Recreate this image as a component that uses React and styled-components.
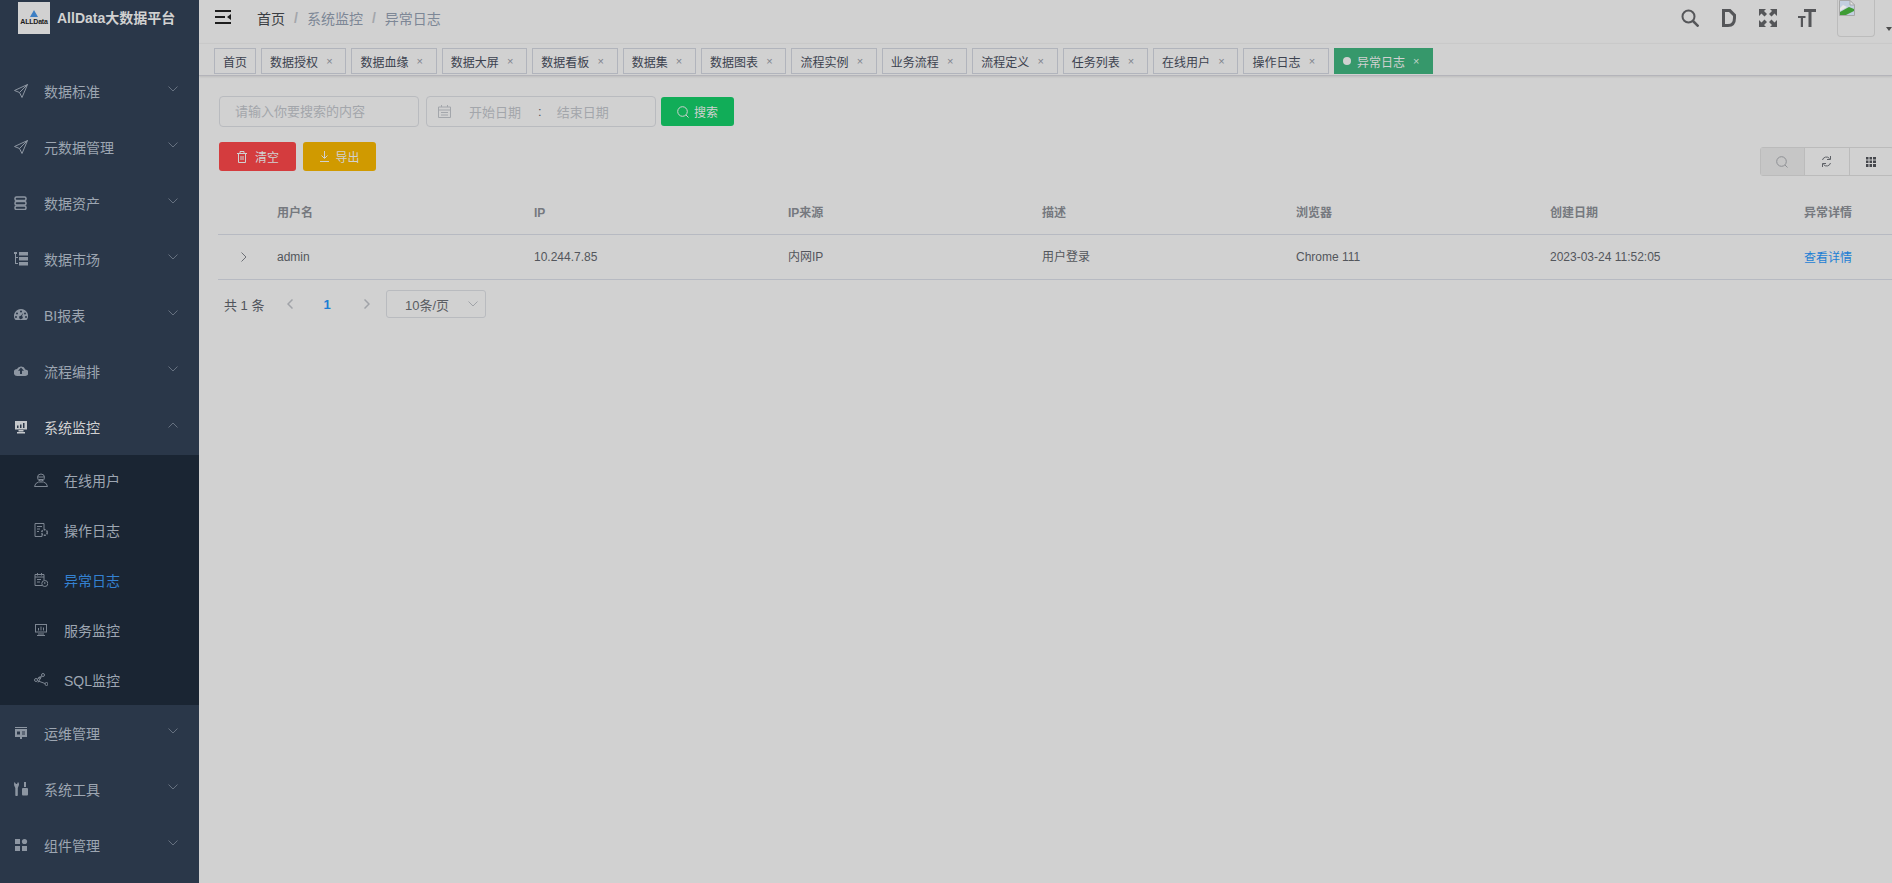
import React from 'react';
import styled, { createGlobalStyle } from 'styled-components';

const GlobalStyle = createGlobalStyle`
    html, body {
        margin: 0;
        padding: 0;
        height: 100%;
        overflow: hidden;
        background: #d1d1d1;
        font-family: "Liberation Sans", "Noto Sans CJK SC", sans-serif;
    }
`;

const Page = styled.div`
    display: flex;
    width: 1892px;
    height: 883px;
    overflow: hidden;
`;

const Sidebar = styled.aside`
    flex: none;
    width: 199px;
    background: #2a3749;
`;

const LogoRow = styled.div`
    display: flex;
    align-items: center;
    gap: 7px;
    height: 36px;
    padding-left: 18px;
    margin-bottom: 27px;
`;

const LogoBox = styled.div`
    width: 32px;
    height: 32px;
    background: #d1d1d1;
    display: flex;
    flex-direction: column;
    align-items: center;
    justify-content: flex-end;
    padding-bottom: 8px;
    box-sizing: border-box;
    svg { display: block; }
`;

const LogoText = styled.span`
    font-size: 7px;
    line-height: 8px;
    font-weight: bold;
    letter-spacing: -0.2px;
    color: #1b1b1b;
`;

const Title = styled.span`
    font-size: 14px;
    font-weight: bold;
    color: #d1d1d1;
    white-space: nowrap;
    margin-bottom: 3px;
`;

const MenuRow = styled.div`
    display: flex;
    align-items: center;
    height: 56px;
    padding-left: 14px;
    color: ${p => (p.$open ? '#d1d1d1' : '#9da6b2')};
    font-size: 14px;
`;

const MenuIcon = styled.svg`
    flex: none;
    width: 14px;
    height: 14px;
    margin-right: 16px;
    color: ${p => p.$color || '#8d96a2'};
`;

const MenuLabel = styled.span`
    flex: 1;
`;

const Chevron = styled.svg`
    flex: none;
    width: 10px;
    height: 6px;
    margin: 0 21px 4px 0;
    color: #667180;
`;

const SelectChevron = styled(Chevron)`
    margin: 0;
    color: #a0a3a8;
`;

const SubMenu = styled.div`
    background: #1a2533;
`;

const SubRow = styled.div`
    display: flex;
    align-items: center;
    height: 50px;
    padding-left: 34px;
    font-size: 14px;
    color: ${p => (p.$active ? '#3481d1' : '#9da6b2')};
`;

const Main = styled.main`
    flex: 1;
    min-width: 0;
    overflow: hidden;
`;

const Header = styled.header`
    display: flex;
    align-items: center;
    height: 43px;
    padding-left: 16px;
    box-sizing: border-box;
`;

const Hamburger = styled.svg`
    flex: none;
    width: 16px;
    height: 14px;
    margin: 0 26px 9px 0;
    color: #1d1d1d;
`;

const Crumb = styled.span`
    font-size: 14px;
    color: ${p => (p.$first ? '#3a3d42' : '#7d8796')};
    margin-bottom: 8px;
`;

const CrumbSep = styled.span`
    font-size: 14px;
    font-weight: bold;
    color: #a3a6ab;
    margin: 0 9px 8px;
`;

const HeaderRight = styled.div`
    display: flex;
    align-items: flex-start;
    align-self: stretch;
    margin-left: auto;
`;

const HeaderIcon = styled.svg`
    flex: none;
    width: 18px;
    height: 18px;
    margin: 9px 21px 0 0;
    color: #555659;
`;

const Avatar = styled.div`
    width: 38px;
    height: 37px;
    box-sizing: border-box;
    border: 1px solid #bcbcbc;
    border-top: none;
    border-radius: 0 0 4px 4px;
    svg { display: block; margin-left: 1px; }
`;

const Caret = styled.span`
    width: 0;
    height: 0;
    margin: 27px 0 0 11px;
    border-left: 3px solid transparent;
    border-right: 3px solid transparent;
    border-top: 4px solid #4d4d4d;
`;

const TabBar = styled.div`
    display: flex;
    gap: 5px;
    height: 33px;
    padding: 4px 0 0 15px;
    box-sizing: border-box;
    border-top: 1px solid #c9c9c9;
    border-bottom: 1px solid #b4b4ba;
    box-shadow: 0 1px 2px rgba(0, 0, 0, 0.1);
`;

const Tag = styled.div`
    display: flex;
    align-items: center;
    height: 26px;
    box-sizing: border-box;
    padding: 0 8px;
    border: 1px solid ${p => (p.$active ? '#36986b' : '#b1b4bc')};
    background: ${p => (p.$active ? '#36986b' : 'transparent')};
    color: ${p => (p.$active ? '#d1d1d1' : '#3c424f')};
    font-size: 12px;
    white-space: nowrap;
`;

const TagDot = styled.span`
    width: 8px;
    height: 8px;
    border-radius: 50%;
    background: #d1d1d1;
    margin-right: 6px;
`;

const TagClose = styled.span`
    width: 16px;
    margin-left: 3.4px;
    font-size: 11px;
    text-align: center;
    color: ${p => (p.$active ? '#c0d4ca' : '#7e838c')};
`;

const Content = styled.div`
    padding: 20px 0 0 20px;
`;

const FilterRow = styled.div`
    display: flex;
    align-items: center;
    gap: 5px;
    height: 31px;
`;

const SearchInput = styled.div`
    width: 200px;
    height: 31px;
    box-sizing: border-box;
    margin-right: 2px;
    border: 1px solid #b9bbbf;
    border-radius: 4px;
    padding-left: 15px;
    font-size: 13px;
    line-height: 29px;
    color: #a3a6ab;
`;

const DateRange = styled.div`
    display: flex;
    align-items: center;
    width: 230px;
    height: 31px;
    box-sizing: border-box;
    border: 1px solid #b9bbbf;
    border-radius: 4px;
    padding-left: 11px;
    font-size: 13px;
    color: #a3a6ab;
    svg { flex: none; margin-right: 18px; }
`;

const DateSep = styled.span`
    margin: 0 15px 0 17px;
    color: #5c5560;
`;

const ActionButton = styled.div`
    display: flex;
    align-items: center;
    justify-content: center;
    gap: ${p => p.$gap || 5}px;
    width: ${p => p.$width}px;
    height: 29px;
    border-radius: 3px;
    background: ${p => p.$bg};
    color: #d1d1d1;
    font-size: 12px;
`;

const ActionsRow = styled.div`
    display: flex;
    align-items: flex-start;
    gap: 7px;
    margin-top: 15px;
`;

const ToolGroup = styled.div`
    display: flex;
    margin: 5px -2px 0 auto;
    height: 29px;
    box-sizing: border-box;
    border: 1px solid #bbbbbb;
    border-radius: 3px;
`;

const ToolButton = styled.div`
    display: flex;
    align-items: center;
    justify-content: center;
    width: 43.5px;
    background: ${p => (p.$pressed ? '#c6c6c6' : 'transparent')};
    & + & { border-left: 1px solid #bbbbbb; }
`;

const Table = styled.div`
    margin: 16px 0 0 -1px;
    width: 1840px;
`;

const TableRow = styled.div`
    display: grid;
    grid-template-columns: 59px 257px repeat(6, 254px);
    align-items: center;
    height: ${p => p.$height}px;
    border-bottom: 1px solid #b7bac2;
    font-size: 12px;
    line-height: 16px;
    color: ${p => (p.$head ? '#76797f' : '#53565c')};
    font-weight: ${p => (p.$head ? 'bold' : 'normal')};
`;

const Cell = styled.span`
    margin-bottom: 1px;
`;

const ExpandCell = styled.div`
    padding-left: 23px;
    svg { display: block; }
`;

const DetailLink = styled.span`
    color: #1c7ed4;
    padding-top: 2px;
`;

const Pagination = styled.div`
    display: flex;
    align-items: center;
    height: 28px;
    margin-top: 10px;
    padding-left: 5px;
    font-size: 13px;
    color: #50545c;
`;

const PageTotal = styled.span`
    width: 63px;
`;

const PageNum = styled.span`
    width: 68px;
    margin-right: 3px;
    text-align: center;
    font-weight: bold;
    color: #1c7ed4;
`;

const PageArrow = styled.svg`
    flex: none;
    width: 6px;
    height: 10px;
    color: #a0a3a8;
`;

const SizeSelect = styled.div`
    display: flex;
    align-items: center;
    justify-content: space-between;
    width: 100px;
    height: 28px;
    box-sizing: border-box;
    margin-left: 16px;
    padding: 0 7px 0 18px;
    border: 1px solid #b9bbbf;
    border-radius: 3px;
    color: #5a5d63;
`;

const stroke = { fill: 'none', stroke: 'currentColor', strokeWidth: 1 };

const icons = {
    plane: <g {...stroke}><path d="M13.5.5.5 6.5 5.5 8.5 8 13.5ZM13.5.5 5.5 8.5" /></g>,
    db: <g {...stroke} strokeWidth="1.5"><rect x="1" y="1" width="11" height="3.5" rx="1.5" /><rect x="1" y="5.5" width="11" height="3.5" rx="1.5" /><rect x="1" y="10" width="11" height="3.5" rx="1.5" /></g>,
    tree: <g fill="currentColor"><rect x="0" y="0" width="3" height="2" /><rect x="1" y="2" width="1" height="10" /><rect x="1" y="11" width="3" height="1" /><rect x="1" y="5" width="3" height="1" /><rect x="5" y="0" width="9" height="3.5" /><rect x="5" y="5" width="9" height="3.5" /><rect x="5" y="10" width="9" height="3.5" /></g>,
    gauge: <path fill="currentColor" fillRule="evenodd" d="M7 1a7 7 0 0 0-6 10.6q.3.4.8.4h10.4q.5 0 .8-.4A7 7 0 0 0 7 1ZM7 2.5a1 1 0 1 1 0 2 1 1 0 0 1 0-2ZM3 4.5a1 1 0 1 1 0 2 1 1 0 0 1 0-2ZM11 4.5a1 1 0 1 1 0 2 1 1 0 0 1 0-2ZM2 8a1 1 0 1 1 0 2 1 1 0 0 1 0-2ZM12 8a1 1 0 1 1 0 2 1 1 0 0 1 0-2ZM9.4 4.7 8 8.1a1.7 1.7 0 1 1-1.1-.4Z" />,
    cloud: <path fill="currentColor" fillRule="evenodd" d="M11.3 5.5A4.5 4.5 0 0 0 3 5a3.5 3.5 0 0 0 .5 7h7.5a3 3 0 0 0 .3-6.5ZM7 3.5l3 3.2H8V10H6V6.7H4Z" />,
    monitor: <g fill="currentColor"><path fillRule="evenodd" d="M1 1h12v8.5H1ZM3 5.5h1.5V8H3ZM6 4.5h1.5V8H6ZM9 3h1.5v5H9Z" /><rect x="4.5" y="10" width="5" height="1.5" /><rect x="3" y="12" width="8" height="1.5" /></g>,
    board: <path fill="currentColor" fillRule="evenodd" d="M1 1h12v1H1ZM1 3h12v8H8v2H6v-2H1ZM3 5.5h3v3H3ZM8 5.5h3v1H8ZM8 7.5h3v1H8Z" />,
    tools: <g fill="currentColor"><path d="M.5 0 2 2h1l1-2q1.5 1.5.8 3.5L3.8 6v7.5q-1.3 1-2.5 0V6L.2 3.5Q-.2 1.5.5 0Z" /><rect x="10" y="0" width="2" height="5" /><path d="M9 6h4q1 0 1 1v5.5q0 1-1 1H9q-1 0-1-1V7q0-1 1-1Z" /></g>,
    grid: <g fill="currentColor"><rect x="1" y="1" width="5" height="5" /><circle cx="10.5" cy="3.5" r="2.6" /><rect x="1" y="8" width="5" height="5" /><rect x="8" y="8" width="5" height="5" /></g>,
    user: <g {...stroke}><circle cx="7" cy="4.5" r="3.5" /><path d="M3.5 4h7M5 6.5h4" /><path d="M.5 13.5q.5-3.5 4-4.5h5q3.5 1 4 4.5Z" /></g>,
    docGear: <g {...stroke}><path d="M8 11.5V13.5H1V.5h9V6" /><path d="M3 3.5h5M3 6h3M3 8.5h2" /><circle cx="10.5" cy="9.5" r="2.8" strokeWidth="1.5" strokeDasharray="2 1" /></g>,
    docClock: <g {...stroke}><path d="M8 12.5H1V1.5h9V7" /><path d="M1 4h9M3 6.5h4M3 9h3" /><path d="M3.5 0v2.5M7.5 0v2.5" /><circle cx="10.8" cy="10.5" r="3" /><path d="M10.8 9v2" /></g>,
    screen: <g fill="currentColor"><path fillRule="evenodd" d="M1 1h12v8.5H1ZM2 2v6.5h10V2Z" /><path d="M4 7.5h1V5H4ZM6.5 7.5h1V3.5h-1ZM9 7.5h1V4.5H9Z" /><rect x="4" y="10.5" width="6" height="1" /><rect x="3" y="12" width="8" height="1" /></g>,
    nodes: <g {...stroke}><circle cx="2" cy="7" r="1.5" /><circle cx="9" cy="2" r="1.5" /><circle cx="12.5" cy="11" r="1.5" /><circle cx="5.5" cy="5" r="1" /><path d="M3.3 6 7.7 3M3.4 7.7 11 10.5M4 9.5 7.5 3.5" /></g>,
};

const topMenus = [
    ['plane', '数据标准'],
    ['plane', '元数据管理'],
    ['db', '数据资产'],
    ['tree', '数据市场'],
    ['gauge', 'BI报表'],
    ['cloud', '流程编排'],
];

const bottomMenus = [
    ['board', '运维管理'],
    ['tools', '系统工具'],
    ['grid', '组件管理'],
];

const subMenus = [
    ['user', '在线用户'],
    ['docGear', '操作日志'],
    ['docClock', '异常日志', true],
    ['screen', '服务监控'],
    ['nodes', 'SQL监控'],
];

const tags = ['数据授权', '数据血缘', '数据大屏', '数据看板', '数据集', '数据图表', '流程实例', '业务流程', '流程定义', '任务列表', '在线用户', '操作日志'];

const columns = ['用户名', 'IP', 'IP来源', '描述', '浏览器', '创建日期', '异常详情'];

const row = ['admin', '10.244.7.85', '内网IP', '用户登录', 'Chrome 111', '2023-03-24 11:52:05'];

function Menu({ icon, label, open }) {
    return (
        <MenuRow $open={open}>
            <MenuIcon viewBox="0 0 14 14" $color={open ? '#c4c7cb' : undefined}>{icons[icon]}</MenuIcon>
            <MenuLabel>{label}</MenuLabel>
            <Chevron viewBox="0 0 10 6">
                <path d={open ? 'M.5 5.5 5 1 9.5 5.5' : 'M.5.5 5 5 9.5.5'} fill="none" stroke="currentColor" />
            </Chevron>
        </MenuRow>
    );
}

export default function App() {
    return (
        <Page>
            <GlobalStyle />
            <Sidebar>
                <LogoRow>
                    <LogoBox>
                        <svg width="8" height="8" viewBox="0 0 8 8"><path d="M4 0 8 7H0Z" fill="#3d7fc4" /></svg>
                        <LogoText>ALLData</LogoText>
                    </LogoBox>
                    <Title>AllData大数据平台</Title>
                </LogoRow>
                {topMenus.map(([icon, label]) => <Menu key={label} icon={icon} label={label} />)}
                <Menu icon="monitor" label="系统监控" open />
                <SubMenu>
                    {subMenus.map(([icon, label, active]) => (
                        <SubRow key={label} $active={active}>
                            <MenuIcon viewBox="0 0 14 14" $color="#7d8692">{icons[icon]}</MenuIcon>
                            {label}
                        </SubRow>
                    ))}
                </SubMenu>
                {bottomMenus.map(([icon, label]) => <Menu key={label} icon={icon} label={label} />)}
            </Sidebar>
            <Main>
                <Header>
                    <Hamburger viewBox="0 0 16 14">
                        <path fill="currentColor" d="M0 0h16v2H0ZM0 6h10v2H0ZM0 12h16v2H0ZM16 4v6l-4-3Z" />
                    </Hamburger>
                    <Crumb $first>首页</Crumb>
                    <CrumbSep>/</CrumbSep>
                    <Crumb>系统监控</Crumb>
                    <CrumbSep>/</CrumbSep>
                    <Crumb>异常日志</Crumb>
                    <HeaderRight>
                        <HeaderIcon viewBox="0 0 18 18">
                            <circle cx="7.5" cy="7.5" r="6" fill="none" stroke="currentColor" strokeWidth="2" />
                            <path d="M12 12l5.5 5.5" stroke="currentColor" strokeWidth="2.5" />
                        </HeaderIcon>
                        <HeaderIcon viewBox="0 0 18 18">
                            <path fill="currentColor" fillRule="evenodd" d="M2 0h8.5L16 5.5V9q0 9-8 9H2ZM5 3v12h3q5 0 5-6V7L9 3Z" />
                        </HeaderIcon>
                        <HeaderIcon viewBox="0 0 18 18">
                            <g fill="currentColor">
                                <path d="M0 0h7L5 2l3 3-2.5 2.5-3-3L0 7Z" />
                                <path d="M18 0h-7l2 2-3 3 2.5 2.5 3-3L18 7Z" />
                                <path d="M0 18h7l-2-2 3-3-2.5-2.5-3 3L0 11Z" />
                                <path d="M18 18h-7l2-2-3-3 2.5-2.5 3 3L18 11Z" />
                            </g>
                        </HeaderIcon>
                        <HeaderIcon viewBox="0 0 18 18">
                            <path fill="currentColor" d="M6 0h12v3h-4.5v15h-3V3H6ZM0 7h7.5v2H5v9H2.8V9H0Z" />
                        </HeaderIcon>
                        <Avatar>
                            <svg width="16" height="16" viewBox="0 0 16 16">
                                <path d="M.5.5H11L15.5 5V15.5H.5Z" fill="#c3cfe0" stroke="#a8a8a8" />
                                <path d="M11 .5V5H15.5Z" fill="#e4e4e4" stroke="#a8a8a8" />
                                <path d="M1 15V12L10 7 15 9V11L7 15Z" fill="#3f9c35" />
                                <path d="M1 8 4 5 8 7 1 11Z" fill="#e8e8e8" />
                            </svg>
                        </Avatar>
                        <Caret />
                    </HeaderRight>
                </Header>
                <TabBar>
                    <Tag>首页</Tag>
                    {tags.map(tag => (
                        <Tag key={tag}>
                            {tag}
                            <TagClose>×</TagClose>
                        </Tag>
                    ))}
                    <Tag $active>
                        <TagDot />
                        异常日志
                        <TagClose $active>×</TagClose>
                    </Tag>
                </TabBar>
                <Content>
                    <FilterRow>
                        <SearchInput>请输入你要搜索的内容</SearchInput>
                        <DateRange>
                            <svg width="13" height="13" viewBox="0 0 13 13">
                                <path d="M.5 2h12v10.5H.5ZM.5 5h12M3 7.5h7M3 10h7M3.5 0v2M9.5 0v2" fill="none" stroke="#a3a6ab" />
                            </svg>
                            开始日期
                            <DateSep>:</DateSep>
                            结束日期
                        </DateRange>
                        <ActionButton $bg="#11ad58" $width={73}>
                            <svg width="12" height="12" viewBox="0 0 12 12">
                                <circle cx="5.5" cy="5.5" r="4.8" fill="none" stroke="#d1d1d1" />
                                <path d="M9 9l2.5 2.5" stroke="#d1d1d1" />
                            </svg>
                            搜索
                        </ActionButton>
                    </FilterRow>
                    <ActionsRow>
                        <ActionButton $bg="#d43c3e" $width={77} $gap={7}>
                            <svg width="12" height="12" viewBox="0 0 12 12">
                                <path d="M1 2.5h10M4 2.5V.5h4v2M2.5 2.5v9h7v-9M5 5v4M7 5v4" fill="none" stroke="#d1d1d1" />
                            </svg>
                            清空
                        </ActionButton>
                        <ActionButton $bg="#d09a00" $width={73}>
                            <svg width="11" height="11" viewBox="0 0 11 11">
                                <path d="M5.5 0v7M2.5 4.5l3 3 3-3M1 10.5h9" fill="none" stroke="#d1d1d1" />
                            </svg>
                            导出
                        </ActionButton>
                        <ToolGroup>
                            <ToolButton $pressed>
                                <svg width="12" height="12" viewBox="0 0 12 12">
                                    <circle cx="5.5" cy="5.5" r="4.8" fill="none" stroke="#8e9094" />
                                    <path d="M9 9l2.5 2.5" stroke="#8e9094" />
                                </svg>
                            </ToolButton>
                            <ToolButton>
                                <svg width="11" height="11" viewBox="0 0 11 11">
                                    <path d="M1.5 4A4 4 0 0 1 8.5 2.5M9.5 7A4 4 0 0 1 2.5 8.5" fill="none" stroke="#5d6066" />
                                    <path d="M9.5 0v3.5H6M1.5 11V7.5H5" fill="none" stroke="#5d6066" />
                                </svg>
                            </ToolButton>
                            <ToolButton>
                                <svg width="10" height="10" viewBox="0 0 10 10">
                                    <path fill="#45474c" d="M0 0h2.5v2.5H0ZM3.5 0H6v2.5H3.5ZM7 0h3v2.5H7ZM0 3.5h2.5V6H0ZM3.5 3.5H6V6H3.5ZM7 3.5h3V6H7ZM0 7h2.5v3H0ZM3.5 7H6v3H3.5ZM7 7h3v3H7Z" />
                                </svg>
                            </ToolButton>
                        </ToolGroup>
                    </ActionsRow>
                    <Table>
                        <TableRow $head $height={42}>
                            <span />
                            {columns.map(col => <Cell key={col}>{col}</Cell>)}
                        </TableRow>
                        <TableRow $height={44}>
                            <ExpandCell>
                                <svg width="6" height="10" viewBox="0 0 6 10">
                                    <path d="M.5.5 5 5 .5 9.5" fill="none" stroke="#6d7076" />
                                </svg>
                            </ExpandCell>
                            {row.map(val => <Cell key={val}>{val}</Cell>)}
                            <DetailLink>查看详情</DetailLink>
                        </TableRow>
                    </Table>
                    <Pagination>
                        <PageTotal>共 1 条</PageTotal>
                        <PageArrow viewBox="0 0 6 10">
                            <path d="M5.5.5 1 5 5.5 9.5" fill="none" stroke="currentColor" strokeWidth="1.5" />
                        </PageArrow>
                        <PageNum>1</PageNum>
                        <PageArrow viewBox="0 0 6 10">
                            <path d="M.5.5 5 5 .5 9.5" fill="none" stroke="currentColor" strokeWidth="1.5" />
                        </PageArrow>
                        <SizeSelect>
                            10条/页
                            <SelectChevron viewBox="0 0 10 6">
                                <path d="M.5.5 5 5 9.5.5" fill="none" stroke="currentColor" />
                            </SelectChevron>
                        </SizeSelect>
                    </Pagination>
                </Content>
            </Main>
        </Page>
    );
}
